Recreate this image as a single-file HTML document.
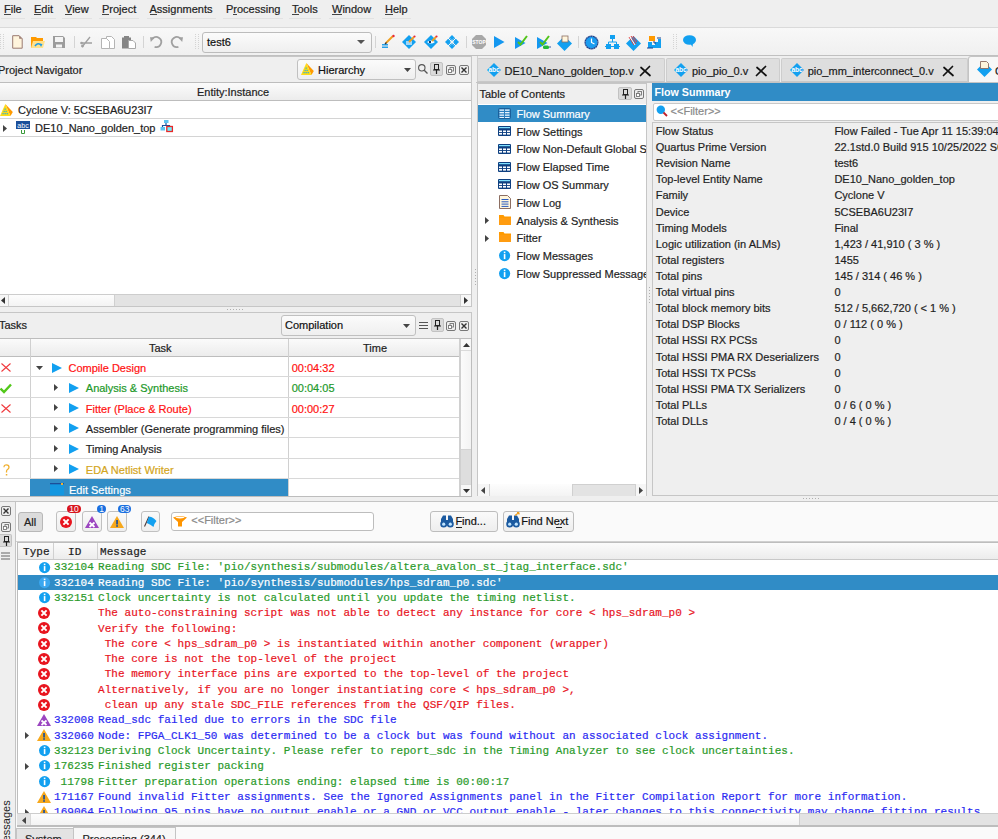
<!DOCTYPE html><html><head><meta charset="utf-8"><style>
html,body{margin:0;padding:0}
body{width:998px;height:839px;overflow:hidden;position:relative;background:#efefef;font-family:'Liberation Sans',sans-serif;font-size:11px;color:#1f1f1f}
.t{position:absolute;white-space:pre;line-height:13px}
.m{-webkit-text-stroke:0.2px;letter-spacing:0.033px}
.s{-webkit-text-stroke:0.2px}
.r{position:absolute;box-sizing:border-box}
svg.r{overflow:visible}
.hdr{background:linear-gradient(#f9f9f9,#ececec)}
.btn{border:1px solid #bdbdbd;border-radius:2px;background:linear-gradient(#f8f8f8,#ececec)}
</style></head><body>

<div class="t s" style="left:4px;top:3px;color:#222;font-family:'Liberation Sans',sans-serif;font-size:11px;">File</div>
<div class="t s" style="left:34px;top:3px;color:#222;font-family:'Liberation Sans',sans-serif;font-size:11px;">Edit</div>
<div class="t s" style="left:65px;top:3px;color:#222;font-family:'Liberation Sans',sans-serif;font-size:11px;">View</div>
<div class="t s" style="left:102px;top:3px;color:#222;font-family:'Liberation Sans',sans-serif;font-size:11px;">Project</div>
<div class="t s" style="left:149.5px;top:3px;color:#222;font-family:'Liberation Sans',sans-serif;font-size:11px;">Assignments</div>
<div class="t s" style="left:226px;top:3px;color:#222;font-family:'Liberation Sans',sans-serif;font-size:11px;">Processing</div>
<div class="t s" style="left:292px;top:3px;color:#222;font-family:'Liberation Sans',sans-serif;font-size:11px;">Tools</div>
<div class="t s" style="left:332px;top:3px;color:#222;font-family:'Liberation Sans',sans-serif;font-size:11px;">Window</div>
<div class="t s" style="left:385px;top:3px;color:#222;font-family:'Liberation Sans',sans-serif;font-size:11px;">Help</div>
<div class="r" style="left:0px;top:27px;width:998px;height:29px;background:linear-gradient(#f8f8f8,#f0f0f0);border-top:1px solid #dadada;border-bottom:1px solid #c0c0c0"></div>
<div class="r" style="left:202px;top:32px;width:170px;height:21px;border:1px solid #bcbcbc;border-radius:3px;background:linear-gradient(#fbfbfb,#efefef)"></div>
<div class="t s" style="left:207px;top:36px;color:#111;font-family:'Liberation Sans',sans-serif;font-size:11px;">test6</div>
<div class="r" style="left:4.0px;top:14px;width:6.71875px;height:1px;background:#444"></div>
<div class="r" style="left:1px;top:18px;width:23.71875px;height:1px;background:#e2e2e2"></div>
<div class="r" style="left:34.0px;top:14px;width:7.34375px;height:1px;background:#444"></div>
<div class="r" style="left:31px;top:18px;width:24.96875px;height:1px;background:#e2e2e2"></div>
<div class="r" style="left:65.0px;top:14px;width:7.34375px;height:1px;background:#444"></div>
<div class="r" style="left:62px;top:18px;width:29.640625px;height:1px;background:#e2e2e2"></div>
<div class="r" style="left:102.0px;top:14px;width:7.34375px;height:1px;background:#444"></div>
<div class="r" style="left:99px;top:18px;width:40.25px;height:1px;background:#e2e2e2"></div>
<div class="r" style="left:149.5px;top:14px;width:7.34375px;height:1px;background:#444"></div>
<div class="r" style="left:146.5px;top:18px;width:69.0px;height:1px;background:#e2e2e2"></div>
<div class="r" style="left:233.34375px;top:14px;width:3.65625px;height:1px;background:#444"></div>
<div class="r" style="left:223px;top:18px;width:60.4375px;height:1px;background:#e2e2e2"></div>
<div class="r" style="left:292.0px;top:14px;width:6.71875px;height:1px;background:#444"></div>
<div class="r" style="left:289px;top:18px;width:31.6875px;height:1px;background:#e2e2e2"></div>
<div class="r" style="left:332.0px;top:14px;width:10.375px;height:1px;background:#444"></div>
<div class="r" style="left:329px;top:18px;width:45.125px;height:1px;background:#e2e2e2"></div>
<div class="r" style="left:385.0px;top:14px;width:7.9375px;height:1px;background:#444"></div>
<div class="r" style="left:382px;top:18px;width:28.625px;height:1px;background:#e2e2e2"></div>
<svg class="r" style="left:0px;top:34px;" width="4" height="16" viewBox="0 0 4 16"><rect x="0" y="0" width="1" height="1" fill="#d4d4d4"/><rect x="3" y="0" width="1" height="1" fill="#d4d4d4"/><rect x="0" y="2" width="1" height="1" fill="#d4d4d4"/><rect x="3" y="2" width="1" height="1" fill="#d4d4d4"/><rect x="0" y="4" width="1" height="1" fill="#d4d4d4"/><rect x="3" y="4" width="1" height="1" fill="#d4d4d4"/><rect x="0" y="6" width="1" height="1" fill="#d4d4d4"/><rect x="3" y="6" width="1" height="1" fill="#d4d4d4"/><rect x="0" y="8" width="1" height="1" fill="#d4d4d4"/><rect x="3" y="8" width="1" height="1" fill="#d4d4d4"/><rect x="0" y="10" width="1" height="1" fill="#d4d4d4"/><rect x="3" y="10" width="1" height="1" fill="#d4d4d4"/><rect x="0" y="12" width="1" height="1" fill="#d4d4d4"/><rect x="3" y="12" width="1" height="1" fill="#d4d4d4"/><rect x="0" y="14" width="1" height="1" fill="#d4d4d4"/><rect x="3" y="14" width="1" height="1" fill="#d4d4d4"/></svg>
<svg class="r" style="left:195px;top:34px;" width="4" height="16" viewBox="0 0 4 16"><rect x="0" y="0" width="1" height="1" fill="#d4d4d4"/><rect x="3" y="0" width="1" height="1" fill="#d4d4d4"/><rect x="0" y="2" width="1" height="1" fill="#d4d4d4"/><rect x="3" y="2" width="1" height="1" fill="#d4d4d4"/><rect x="0" y="4" width="1" height="1" fill="#d4d4d4"/><rect x="3" y="4" width="1" height="1" fill="#d4d4d4"/><rect x="0" y="6" width="1" height="1" fill="#d4d4d4"/><rect x="3" y="6" width="1" height="1" fill="#d4d4d4"/><rect x="0" y="8" width="1" height="1" fill="#d4d4d4"/><rect x="3" y="8" width="1" height="1" fill="#d4d4d4"/><rect x="0" y="10" width="1" height="1" fill="#d4d4d4"/><rect x="3" y="10" width="1" height="1" fill="#d4d4d4"/><rect x="0" y="12" width="1" height="1" fill="#d4d4d4"/><rect x="3" y="12" width="1" height="1" fill="#d4d4d4"/><rect x="0" y="14" width="1" height="1" fill="#d4d4d4"/><rect x="3" y="14" width="1" height="1" fill="#d4d4d4"/></svg>
<svg class="r" style="left:673px;top:34px;" width="4" height="16" viewBox="0 0 4 16"><rect x="0" y="0" width="1" height="1" fill="#d4d4d4"/><rect x="3" y="0" width="1" height="1" fill="#d4d4d4"/><rect x="0" y="2" width="1" height="1" fill="#d4d4d4"/><rect x="3" y="2" width="1" height="1" fill="#d4d4d4"/><rect x="0" y="4" width="1" height="1" fill="#d4d4d4"/><rect x="3" y="4" width="1" height="1" fill="#d4d4d4"/><rect x="0" y="6" width="1" height="1" fill="#d4d4d4"/><rect x="3" y="6" width="1" height="1" fill="#d4d4d4"/><rect x="0" y="8" width="1" height="1" fill="#d4d4d4"/><rect x="3" y="8" width="1" height="1" fill="#d4d4d4"/><rect x="0" y="10" width="1" height="1" fill="#d4d4d4"/><rect x="3" y="10" width="1" height="1" fill="#d4d4d4"/><rect x="0" y="12" width="1" height="1" fill="#d4d4d4"/><rect x="3" y="12" width="1" height="1" fill="#d4d4d4"/><rect x="0" y="14" width="1" height="1" fill="#d4d4d4"/><rect x="3" y="14" width="1" height="1" fill="#d4d4d4"/></svg>
<div class="r" style="left:73.5px;top:36px;width:1px;height:12px;background:#d4d4d4"></div>
<div class="r" style="left:142.5px;top:36px;width:1px;height:12px;background:#d4d4d4"></div>
<div class="r" style="left:375px;top:36px;width:1px;height:12px;background:#d4d4d4"></div>
<div class="r" style="left:465.5px;top:36px;width:1px;height:12px;background:#d4d4d4"></div>
<div class="r" style="left:577.5px;top:36px;width:1px;height:12px;background:#d4d4d4"></div>
<svg class="r" style="left:11.5px;top:35px;" width="11" height="14" viewBox="0 0 11 14"><path d="M0.7 0.7h6.5l3 3v9.5H0.7z" fill="#fff4dc" stroke="#9a7a70" stroke-width="1"/><path d="M7.2 0.7l3 3h-3z" fill="#9a7a70"/></svg>
<svg class="r" style="left:31px;top:36px;" width="15" height="12" viewBox="0 0 15 12"><path d="M0 1h5l1 1h6v3H0z" fill="#ff9a00"/><path d="M0 3h12v9H0z" fill="#ff9a00"/><path d="M2 5h12l-2 7H0z" fill="#ffe28e"/><path d="M4 10q3-4 6-1" fill="none" stroke="#1d9be6" stroke-width="1.6"/><path d="M8.5 7.5l3 0.5-1.5 3z" fill="#1d9be6"/></svg>
<svg class="r" style="left:53px;top:35.5px;" width="12" height="12" viewBox="0 0 12 12"><path d="M0 0h10l2 2v10H0z" fill="#9c9c9c"/><rect x="2" y="1" width="8" height="5" fill="#f4f4f4"/><rect x="3" y="8.5" width="6" height="3" fill="#f4f4f4"/></svg>
<svg class="r" style="left:80px;top:36px;" width="13" height="12" viewBox="0 0 13 12"><path d="M2 11L10 1M12 7L1 7" stroke="#a0a0a0" stroke-width="1.3" fill="none"/><circle cx="2.5" cy="10" r="1.4" fill="#a0a0a0"/><circle cx="1.5" cy="7" r="1.3" fill="#a0a0a0"/></svg>
<svg class="r" style="left:101px;top:35.5px;" width="14" height="13" viewBox="0 0 14 13"><path d="M5.5 0.5h5l3 3v9h-8z" fill="#fff" stroke="#b4b4b4"/><path d="M0.5 2.5h5l3 3v7h-8z" fill="#fff" stroke="#b4b4b4"/></svg>
<svg class="r" style="left:122px;top:35.5px;" width="14" height="13" viewBox="0 0 14 13"><path d="M0 1.5h9v11H0z" fill="#858585"/><rect x="2" y="0" width="5" height="2.5" fill="#858585"/><path d="M6.5 4.5h4.5l2.5 2.5v5.5h-7z" fill="#fff" stroke="#a8a8a8"/></svg>
<svg class="r" style="left:150px;top:36px;" width="12" height="12" viewBox="0 0 12 12"><path d="M2.6 2.6A5 5 0 1 1 4.6 10.8" fill="none" stroke="#a0a0a0" stroke-width="1.8"/><path d="M0 1.2L5 1.2L0.8 6z" fill="#a0a0a0"/></svg>
<svg class="r" style="left:171px;top:36px;" width="12" height="12" viewBox="0 0 12 12"><path d="M9.4 2.6A5 5 0 1 0 7.4 10.8" fill="none" stroke="#a0a0a0" stroke-width="1.8"/><path d="M12 1.2L7 1.2L11.2 6z" fill="#a0a0a0"/></svg>
<svg class="r" style="left:357px;top:40px;" width="8" height="5" viewBox="0 0 8 5"><path d="M0 0h8l-4 4z" fill="#555"/></svg>
<svg class="r" style="left:381px;top:35px;" width="15" height="14" viewBox="0 0 15 14"><rect x="1" y="9" width="6" height="1.5" fill="#26a0e8"/><rect x="1" y="11.5" width="6" height="1.5" fill="#26a0e8"/><path d="M5 8L12 1" stroke="#f0a020" stroke-width="2"/><circle cx="12.5" cy="1" r="1.2" fill="#e8283c"/><path d="M4 9l1.5-1.5" stroke="#333" stroke-width="1.5"/></svg>
<svg class="r" style="left:402px;top:35px;" width="14" height="14" viewBox="0 0 14 14"><path d="M7.0 0L14 7.0L7.0 14L0 7.0z" fill="#12a0f0"/><rect x="4" y="6" width="6" height="4" fill="#9ed6f7"/><path d="M7 7L12 2" stroke="#f0a020" stroke-width="1.8"/><circle cx="12.5" cy="1.5" r="1.1" fill="#e8283c"/></svg>
<svg class="r" style="left:423.5px;top:35px;" width="14" height="14" viewBox="0 0 14 14"><path d="M7.0 0L14 7.0L7.0 14L0 7.0z" fill="#12a0f0"/><path d="M3 7q4-3 8 0q-4 3-8 0z" fill="#fff"/><rect x="5" y="6" width="2" height="2" fill="#1a3a6a"/><path d="M8 6L12 2" stroke="#f0a020" stroke-width="1.8"/><circle cx="12.5" cy="1.5" r="1.1" fill="#e8283c"/></svg>
<svg class="r" style="left:445px;top:35px;" width="14" height="14" viewBox="0 0 14 14"><g fill="#12a0f0"><path d="M7 0l2.5 2.5-2.5 2.5-2.5-2.5z"/><path d="M2.5 4.5l2.5 2.5-2.5 2.5-2.5-2.5z"/><path d="M11.5 4.5l2.5 2.5-2.5 2.5-2.5-2.5z"/><path d="M7 9l2.5 2.5-2.5 2.5-2.5-2.5z"/><path d="M4.5 2.5l2.5 2.5-2.5 2.5-2.5-2.5z" opacity=".9"/><path d="M9.5 2.5l2.5 2.5-2.5 2.5-2.5-2.5z" opacity=".9"/><path d="M4.5 6.5l2.5 2.5-2.5 2.5-2.5-2.5z" opacity=".9"/><path d="M9.5 6.5l2.5 2.5-2.5 2.5-2.5-2.5z" opacity=".9"/></g><path d="M3 3L11 11M11 3L3 11" stroke="#f5f5f5" stroke-width="1"/></svg>
<svg class="r" style="left:472px;top:34.5px;" width="14" height="14" viewBox="0 0 14 14"><path d="M4 0h6l4 4v6l-4 4H4L0 10V4z" fill="#a8a8a8"/><text x="7" y="9" font-size="5" font-family="Liberation Sans" font-weight="bold" fill="#fff" text-anchor="middle">STOP</text></svg>
<svg class="r" style="left:494px;top:36px;" width="11" height="12" viewBox="0 0 11 12"><path d="M0 0L10.5 6L0 12z" fill="#1497f0"/></svg>
<svg class="r" style="left:515px;top:35px;" width="13" height="14" viewBox="0 0 13 14"><path d="M0 2L10.5 8L0 14z" fill="#1497f0"/><path d="M3 7l2.5 2.5L12 1" stroke="#52c41a" stroke-width="2" fill="none"/></svg>
<svg class="r" style="left:536.5px;top:35px;" width="14" height="14" viewBox="0 0 14 14"><path d="M0 2L10.5 8L0 14z" fill="#1497f0"/><path d="M3 7l2.5 2.5L12 1" stroke="#52c41a" stroke-width="2" fill="none"/><rect x="6" y="10.5" width="6" height="3.5" rx="1.5" fill="#22b83a"/><path d="M12 12h2" stroke="#3355aa"/></svg>
<svg class="r" style="left:556.5px;top:35.5px;" width="15" height="15" viewBox="0 0 15 15"><path d="M7.5 0L15 7.5L7.5 15L0 7.5z" fill="#12a0f0"/><rect x="5" y="0" width="6" height="6" fill="#fff5dc" stroke="#8c6e62" stroke-width=".8"/></svg>
<svg class="r" style="left:584px;top:34.5px;" width="15" height="15" viewBox="0 0 15 15"><circle cx="7.5" cy="7.5" r="7" fill="#1b3f8a"/><circle cx="7.5" cy="7.5" r="5.8" fill="#1a9cf0"/><path d="M7.5 3.5v4l3 1.5" stroke="#fff" stroke-width="1.2" fill="none"/><circle cx="7.5" cy="7.5" r="6.4" fill="none" stroke="#fff" stroke-width=".5" stroke-dasharray="1 1.5"/></svg>
<svg class="r" style="left:604.5px;top:34.5px;" width="15" height="15" viewBox="0 0 15 15"><g fill="#12a0f0"><rect x="5" y="0" width="5" height="4"/><rect x="1" y="9" width="5" height="5"/><rect x="9" y="9" width="5" height="5"/></g><path d="M7.5 4v3M3.5 9V7h8v2M0 11.5h15" stroke="#12a0f0" stroke-width="1" fill="none"/></svg>
<svg class="r" style="left:625.5px;top:36px;" width="15" height="15" viewBox="0 0 15 15"><path d="M7.5 0L15 7.5L7.5 15L0 7.5z" fill="#12a0f0"/><path d="M3 1L8 9M5 0L10 8M7 0L11 6" stroke="#e23a3a" stroke-width="1"/><path d="M4 1L9 9" stroke="#fff" stroke-width="1"/></svg>
<svg class="r" style="left:647px;top:34.5px;" width="15" height="15" viewBox="0 0 15 15"><rect x="2" y="1" width="6" height="5" fill="#ff9a00"/><path d="M1 7h4v3h3v-3h3v-3h3v9H1z" fill="#12a0f0"/><path d="M0 13h6M10 3h4" stroke="#1b3f8a" stroke-width="1"/><path d="M7 6v2h2" stroke="#1b3f8a" fill="none"/></svg>
<svg class="r" style="left:683px;top:35px;" width="13" height="12" viewBox="0 0 13 12"><ellipse cx="6.5" cy="5" rx="6.5" ry="4.8" fill="#12a0f0"/><path d="M7 8l2.5 4L10 8z" fill="#12a0f0"/></svg>
<div class="t s" style="left:-2px;top:64px;color:#222;font-family:'Liberation Sans',sans-serif;font-size:11px;">Project Navigator</div>
<div class="r" style="left:297px;top:59px;width:119px;height:21px;border:1px solid #c0c0c0;border-radius:3px;background:linear-gradient(#fbfbfb,#efefef)"></div>
<div class="t s" style="left:318px;top:64px;color:#111;font-family:'Liberation Sans',sans-serif;font-size:11px;">Hierarchy</div>
<div class="r" style="left:0px;top:82px;width:472px;height:225px;background:#fff;border:1px solid #bdbdbd;border-left:none"></div>
<div class="r" style="left:0px;top:83px;width:471px;height:18px;background:linear-gradient(#fbfbfb,#ececec);border-bottom:1px solid #bdbdbd"></div>
<div class="t s" style="left:197px;top:86px;color:#222;font-family:'Liberation Sans',sans-serif;font-size:11px;">Entity:Instance</div>
<div class="r" style="left:0px;top:118px;width:471px;height:1px;background:#d4d4d4"></div>
<div class="r" style="left:0px;top:136px;width:471px;height:1px;background:#d4d4d4"></div>
<div class="t s" style="left:18px;top:104px;color:#222;font-family:'Liberation Sans',sans-serif;font-size:11px;">Cyclone V: 5CSEBA6U23I7</div>
<div class="t s" style="left:35px;top:121.5px;color:#222;font-family:'Liberation Sans',sans-serif;font-size:11px;">DE10_Nano_golden_top</div>
<div class="r" style="left:0px;top:294px;width:471px;height:12px;background:#e3e3e3;border-top:1px solid #cdcdcd"></div>
<div class="r" style="left:459.5px;top:295px;width:11.5px;height:11px;background:#f6f6f6;border-left:1px solid #d0d0d0"></div>
<div class="r" style="left:0px;top:295px;width:8.5px;height:11px;background:#f6f6f6;border-right:1px solid #d0d0d0"></div>
<div class="r" style="left:-2px;top:56px;width:474px;height:251px;border:1px solid #c6c6c6"></div>
<div class="r" style="left:-2px;top:312px;width:474px;height:185px;border:1px solid #c6c6c6"></div>
<div class="r" style="left:476.5px;top:56px;width:1px;height:441px;background:#d0d0d0"></div>
<div class="r" style="left:8.5px;top:295px;width:106px;height:11px;background:linear-gradient(#fdfdfd,#f3f3f3);border-right:1px solid #d0d0d0"></div>
<svg class="r" style="left:403.5px;top:67.5px;" width="7" height="4" viewBox="0 0 7 4"><path d="M0 0h7l-3.5 4z" fill="#444"/></svg>
<svg class="r" style="left:301px;top:62.5px;" width="13" height="12" viewBox="0 0 13 12"><path d="M5.3 0L12.8 8L10.5 12z" fill="#ff9a00"/><path d="M5.3 0L10.5 12H0z" fill="#ffdc14"/><g fill="#3ab0d0"><rect x="4.5" y="4.5" width="1.3" height="1.3"/><rect x="3.5" y="6.8" width="1.3" height="1.3"/><rect x="5.5" y="6.8" width="1.3" height="1.3"/><rect x="2.4" y="9" width="1.3" height="1.3"/><rect x="4.5" y="9" width="1.3" height="1.3"/><rect x="6.6" y="9" width="1.3" height="1.3"/></g></svg>
<svg class="r" style="left:418px;top:64px;" width="10" height="10" viewBox="0 0 10 10"><circle cx="3.8" cy="3.8" r="3.2" fill="none" stroke="#555" stroke-width="1.1"/><path d="M6.2 6.2L9.5 9.5" stroke="#555" stroke-width="1.3"/></svg>
<div class="r" style="left:430px;top:62px;width:13px;height:13.5px;background:#dadada;border:1px solid #c2c2c2;border-radius:2px"></div>
<svg class="r" style="left:433px;top:64px;" width="7" height="10" viewBox="0 0 7 10"><rect x="1.5" y="0.5" width="4" height="5" fill="none" stroke="#222" stroke-width="1"/><path d="M0 6h7M3.5 6v4" stroke="#222" stroke-width="1.2"/></svg>
<svg class="r" style="left:446px;top:64.5px;" width="10" height="10" viewBox="0 0 10 10"><rect x="0.5" y="0.5" width="9" height="9" rx="1.5" fill="none" stroke="#777" stroke-width="1"/><rect x="4" y="2.5" width="3.5" height="3.5" fill="none" stroke="#777" stroke-width=".9"/><rect x="2.5" y="4.5" width="3" height="3" fill="#fff" stroke="#777" stroke-width=".9"/></svg>
<svg class="r" style="left:459px;top:64.5px;" width="10" height="10" viewBox="0 0 10 10"><rect x="0.5" y="0.5" width="9" height="9" rx="1.5" fill="none" stroke="#777" stroke-width="1"/><path d="M2.5 2.5l5 5M7.5 2.5l-5 5" stroke="#333" stroke-width="1.4"/></svg>
<svg class="r" style="left:0px;top:103.5px;" width="13" height="12" viewBox="0 0 13 12"><path d="M5.3 0L12.8 8L10.5 12z" fill="#ff9a00"/><path d="M5.3 0L10.5 12H0z" fill="#ffdc14"/><g fill="#3ab0d0"><rect x="4.5" y="4.5" width="1.3" height="1.3"/><rect x="3.5" y="6.8" width="1.3" height="1.3"/><rect x="5.5" y="6.8" width="1.3" height="1.3"/><rect x="2.4" y="9" width="1.3" height="1.3"/><rect x="4.5" y="9" width="1.3" height="1.3"/><rect x="6.6" y="9" width="1.3" height="1.3"/></g></svg>
<svg class="r" style="left:3px;top:124.5px;" width="4" height="7" viewBox="0 0 4 7"><path d="M0 0v7l4-3.5z" fill="#444"/></svg>
<svg class="r" style="left:16px;top:121px;" width="14" height="14" viewBox="0 0 14 14"><rect x="0" y="0" width="14" height="8" fill="#1b4f9a"/><text x="7" y="6.5" font-size="7" font-family="Liberation Sans" fill="#fff" text-anchor="middle">abc</text><path d="M5.5 9v3.5h3V9" stroke="#3a9a3a" stroke-width="1" fill="none"/></svg>
<svg class="r" style="left:159.5px;top:120px;" width="13" height="12" viewBox="0 0 13 12"><rect x="4" y="0" width="4.5" height="3" fill="#5ec4f0"/><path d="M6 3v2.5M2.5 7.5V5.5h7v2" stroke="#1b4f9a" stroke-width="1.2" fill="none"/><rect x="0.5" y="7" width="4.5" height="3.5" fill="#5ec4f0"/><rect x="6.8" y="6.5" width="5.6" height="5" fill="#6cf0ff" stroke="#e82828" stroke-width="1.3"/></svg>
<div class="t s" style="left:-1px;top:319px;color:#222;font-family:'Liberation Sans',sans-serif;font-size:11px;">Tasks</div>
<div class="r" style="left:281px;top:315px;width:135px;height:21px;border:1px solid #c0c0c0;border-radius:3px;background:linear-gradient(#fbfbfb,#efefef)"></div>
<div class="t s" style="left:285px;top:319px;color:#111;font-family:'Liberation Sans',sans-serif;font-size:11px;">Compilation</div>
<div class="r" style="left:0px;top:338px;width:472px;height:159px;background:#fff;border:1px solid #bdbdbd;border-left:none"></div>
<div class="r" style="left:0px;top:339px;width:459px;height:18px;background:linear-gradient(#fbfbfb,#ececec);border-bottom:1px solid #bdbdbd"></div>
<div class="r" style="left:30px;top:339px;width:1px;height:157px;background:#d0d0d0"></div>
<div class="r" style="left:288px;top:339px;width:1px;height:157px;background:#d0d0d0"></div>
<div class="r" style="left:459px;top:339px;width:1px;height:157px;background:#d0d0d0"></div>
<div class="t s" style="left:149px;top:342px;color:#222;font-family:'Liberation Sans',sans-serif;font-size:11px;">Task</div>
<div class="t s" style="left:363px;top:342px;color:#222;font-family:'Liberation Sans',sans-serif;font-size:11px;">Time</div>
<div class="r" style="left:0px;top:376.35px;width:459px;height:1px;background:#d8d8d8"></div>
<div class="t s" style="left:68.5px;top:362.0px;color:#f11;font-family:'Liberation Sans',sans-serif;font-size:11px;">Compile Design</div>
<div class="t s" style="left:291.7px;top:362.0px;color:#f11;font-family:'Liberation Sans',sans-serif;font-size:11px;">00:04:32</div>
<div class="r" style="left:0px;top:396.70000000000005px;width:459px;height:1px;background:#d8d8d8"></div>
<div class="t s" style="left:85.8px;top:382.35px;color:#22992a;font-family:'Liberation Sans',sans-serif;font-size:11px;">Analysis &amp; Synthesis</div>
<div class="t s" style="left:291.7px;top:382.35px;color:#22992a;font-family:'Liberation Sans',sans-serif;font-size:11px;">00:04:05</div>
<div class="r" style="left:0px;top:417.05px;width:459px;height:1px;background:#d8d8d8"></div>
<div class="t s" style="left:85.8px;top:402.7px;color:#f11;font-family:'Liberation Sans',sans-serif;font-size:11px;">Fitter (Place &amp; Route)</div>
<div class="t s" style="left:291.7px;top:402.7px;color:#f11;font-family:'Liberation Sans',sans-serif;font-size:11px;">00:00:27</div>
<div class="r" style="left:0px;top:437.40000000000003px;width:459px;height:1px;background:#d8d8d8"></div>
<div class="t s" style="left:85.8px;top:423.05px;color:#1f1f1f;font-family:'Liberation Sans',sans-serif;font-size:11px;">Assembler (Generate programming files)</div>
<div class="r" style="left:0px;top:457.75px;width:459px;height:1px;background:#d8d8d8"></div>
<div class="t s" style="left:85.8px;top:443.4px;color:#1f1f1f;font-family:'Liberation Sans',sans-serif;font-size:11px;">Timing Analysis</div>
<div class="r" style="left:0px;top:478.1px;width:459px;height:1px;background:#d8d8d8"></div>
<div class="t s" style="left:85.8px;top:463.75px;color:#d4a520;font-family:'Liberation Sans',sans-serif;font-size:11px;">EDA Netlist Writer</div>
<div class="r" style="left:30px;top:479px;width:258px;height:17px;background:#308cc6"></div>
<div class="t s" style="left:69px;top:483.5px;color:#fff;font-family:'Liberation Sans',sans-serif;font-size:11px;">Edit Settings</div>
<svg class="r" style="left:402.5px;top:324px;" width="7" height="4" viewBox="0 0 7 4"><path d="M0 0h7l-3.5 4z" fill="#444"/></svg>
<svg class="r" style="left:419px;top:321px;" width="9" height="9" viewBox="0 0 9 9"><path d="M0 1.5h9M0 4.5h9M0 7.5h9" stroke="#555" stroke-width="1.2"/></svg>
<div class="r" style="left:430.5px;top:318px;width:13px;height:13.5px;background:#dadada;border:1px solid #c2c2c2;border-radius:2px"></div>
<svg class="r" style="left:433.5px;top:320px;" width="7" height="10" viewBox="0 0 7 10"><rect x="1.5" y="0.5" width="4" height="5" fill="none" stroke="#222" stroke-width="1"/><path d="M0 6h7M3.5 6v4" stroke="#222" stroke-width="1.2"/></svg>
<svg class="r" style="left:446px;top:320.5px;" width="10" height="10" viewBox="0 0 10 10"><rect x="0.5" y="0.5" width="9" height="9" rx="1.5" fill="none" stroke="#777" stroke-width="1"/><rect x="4" y="2.5" width="3.5" height="3.5" fill="none" stroke="#777" stroke-width=".9"/><rect x="2.5" y="4.5" width="3" height="3" fill="#fff" stroke="#777" stroke-width=".9"/></svg>
<svg class="r" style="left:459px;top:320.5px;" width="10" height="10" viewBox="0 0 10 10"><rect x="0.5" y="0.5" width="9" height="9" rx="1.5" fill="none" stroke="#777" stroke-width="1"/><path d="M2.5 2.5l5 5M7.5 2.5l-5 5" stroke="#333" stroke-width="1.4"/></svg>
<svg class="r" style="left:1px;top:363px;" width="10" height="9" viewBox="0 0 10 9"><path d="M0.5 0.5L9.5 8.5M9.5 0.5L0.5 8.5" stroke="#f0383c" stroke-width="1.1"/></svg>
<svg class="r" style="left:0px;top:383px;" width="12" height="10" viewBox="0 0 12 10"><path d="M0.5 5.5L4 9L11 1.5" stroke="#52c81a" stroke-width="2.4" fill="none"/></svg>
<svg class="r" style="left:1px;top:404px;" width="10" height="9" viewBox="0 0 10 9"><path d="M0.5 0.5L9.5 8.5M9.5 0.5L0.5 8.5" stroke="#f0383c" stroke-width="1.1"/></svg>
<svg class="r" style="left:3px;top:463.5px;" width="7" height="12" viewBox="0 0 7 12"><path d="M1 3.2Q1 0.8 3.5 0.8Q6 0.8 6 3.2Q6 4.8 4.2 5.8Q3.5 6.3 3.5 7.8V8.5" stroke="#f0b030" stroke-width="1.3" fill="none"/><rect x="2.8" y="10" width="1.5" height="1.5" fill="#f0b030"/></svg>
<svg class="r" style="left:36px;top:365.5px;" width="7" height="4" viewBox="0 0 7 4"><path d="M0 0h7l-3.5 4z" fill="#444"/></svg>
<svg class="r" style="left:51.5px;top:362.5px;" width="10" height="10" viewBox="0 0 10 10"><path d="M0 0L10 5L0 10z" fill="#12a0f0"/></svg>
<svg class="r" style="left:54px;top:384.0px;" width="4" height="7" viewBox="0 0 4 7"><path d="M0 0v7l4-3.5z" fill="#444"/></svg>
<svg class="r" style="left:68.5px;top:382.5px;" width="10" height="10" viewBox="0 0 10 10"><path d="M0 0L10 5L0 10z" fill="#12a0f0"/></svg>
<svg class="r" style="left:54px;top:404.35px;" width="4" height="7" viewBox="0 0 4 7"><path d="M0 0v7l4-3.5z" fill="#444"/></svg>
<svg class="r" style="left:68.5px;top:402.85px;" width="10" height="10" viewBox="0 0 10 10"><path d="M0 0L10 5L0 10z" fill="#12a0f0"/></svg>
<svg class="r" style="left:54px;top:424.7px;" width="4" height="7" viewBox="0 0 4 7"><path d="M0 0v7l4-3.5z" fill="#444"/></svg>
<svg class="r" style="left:68.5px;top:423.2px;" width="10" height="10" viewBox="0 0 10 10"><path d="M0 0L10 5L0 10z" fill="#12a0f0"/></svg>
<svg class="r" style="left:54px;top:445.05px;" width="4" height="7" viewBox="0 0 4 7"><path d="M0 0v7l4-3.5z" fill="#444"/></svg>
<svg class="r" style="left:68.5px;top:443.55px;" width="10" height="10" viewBox="0 0 10 10"><path d="M0 0L10 5L0 10z" fill="#12a0f0"/></svg>
<svg class="r" style="left:54px;top:465.4px;" width="4" height="7" viewBox="0 0 4 7"><path d="M0 0v7l4-3.5z" fill="#444"/></svg>
<svg class="r" style="left:68.5px;top:463.9px;" width="10" height="10" viewBox="0 0 10 10"><path d="M0 0L10 5L0 10z" fill="#12a0f0"/></svg>
<svg class="r" style="left:49.5px;top:483px;" width="14" height="12" viewBox="0 0 14 12"><rect x="0" y="0" width="14" height="12" fill="#1497e0"/><rect x="0" y="0" width="14" height="1.3" fill="#1b4f9a"/><rect x="11" y="0" width="2" height="2" fill="#f0b030"/></svg>
<div class="r" style="left:460px;top:339px;width:11px;height:157px;background:#dedede;border-left:1px solid #d0d0d0"></div>
<div class="r" style="left:461px;top:339px;width:10px;height:11.5px;background:#f7f7f7;border-bottom:1px solid #dadada"></div>
<div class="r" style="left:461px;top:350.5px;width:10px;height:99.5px;background:linear-gradient(90deg,#fbfbfb,#f3f3f3);border-bottom:1px solid #d4d4d4"></div>
<div class="r" style="left:461px;top:483.5px;width:10px;height:12.5px;background:#f7f7f7;border-top:1px solid #dadada"></div>
<svg class="r" style="left:462.5px;top:343px;" width="7" height="4" viewBox="0 0 7 4"><path d="M0 4h7L3.5 0z" fill="#333"/></svg>
<svg class="r" style="left:462.5px;top:489px;" width="7" height="4" viewBox="0 0 7 4"><path d="M0 0h7L3.5 4z" fill="#333"/></svg>
<svg class="r" style="left:1px;top:297px;" width="4" height="7" viewBox="0 0 4 7"><path d="M4 0v7L0 3.5z" fill="#333"/></svg>
<svg class="r" style="left:464px;top:297px;" width="4" height="7" viewBox="0 0 4 7"><path d="M0 0v7l4-3.5z" fill="#333"/></svg>
<div class="r" style="left:477px;top:58px;width:188px;height:23.5px;background:#dedede;border:1px solid #cdcdcd;border-bottom:1px solid #c8c8c8;border-radius:2px 2px 0 0"></div>
<div class="t s" style="left:504.6px;top:65.3px;color:#1a1a1a;font-family:'Liberation Sans',sans-serif;font-size:11px;">DE10_Nano_golden_top.v</div>
<div class="r" style="left:666px;top:58px;width:114px;height:23.5px;background:#dedede;border:1px solid #cdcdcd;border-bottom:1px solid #c8c8c8;border-radius:2px 2px 0 0"></div>
<div class="t s" style="left:692px;top:65.3px;color:#1a1a1a;font-family:'Liberation Sans',sans-serif;font-size:11px;">pio_pio_0.v</div>
<div class="r" style="left:781px;top:58px;width:187px;height:23.5px;background:#dedede;border:1px solid #cdcdcd;border-bottom:1px solid #c8c8c8;border-radius:2px 2px 0 0"></div>
<div class="t s" style="left:807.7px;top:65.3px;color:#1a1a1a;font-family:'Liberation Sans',sans-serif;font-size:11px;">pio_mm_interconnect_0.v</div>
<div class="r" style="left:968px;top:56px;width:40px;height:27px;background:#f7f7f7;border:1px solid #c4c4c4;border-bottom:none;border-radius:3px 3px 0 0"></div>
<div class="t s" style="left:995px;top:65.3px;color:#1a1a1a;font-family:'Liberation Sans',sans-serif;font-size:11px;">Compilation Report - test6</div>
<div class="r" style="left:476px;top:82px;width:522px;height:416px;background:#efefef;border-top:1px solid #c4c4c4"></div>
<div class="r" style="left:477px;top:83px;width:170px;height:413px;background:#fff;border:1px solid #c6c6c6"></div>
<div class="r" style="left:478px;top:84px;width:168px;height:20px;background:#efefef"></div>
<div class="t s" style="left:479.5px;top:87.7px;color:#222;font-family:'Liberation Sans',sans-serif;font-size:11px;">Table of Contents</div>
<div class="r" style="left:478px;top:104.5px;width:168px;height:17px;background:#308cc6"></div>
<div class="r" style="left:478px;top:104px;width:168px;height:380px;overflow:hidden">
<div class="t s" style="left:38.5px;top:3.799999999999997px;color:#fff">Flow Summary</div>
<div class="t s" style="left:38.5px;top:21.599999999999994px;color:#1f1f1f">Flow Settings</div>
<div class="t s" style="left:38.5px;top:39.400000000000006px;color:#1f1f1f">Flow Non-Default Global Settings</div>
<div class="t s" style="left:38.5px;top:57.19999999999999px;color:#1f1f1f">Flow Elapsed Time</div>
<div class="t s" style="left:38.5px;top:75.0px;color:#1f1f1f">Flow OS Summary</div>
<div class="t s" style="left:38.5px;top:92.80000000000001px;color:#1f1f1f">Flow Log</div>
<div class="t s" style="left:38.5px;top:110.60000000000002px;color:#1f1f1f">Analysis &amp; Synthesis</div>
<div class="t s" style="left:38.5px;top:128.4px;color:#1f1f1f">Fitter</div>
<div class="t s" style="left:38.5px;top:146.2px;color:#1f1f1f">Flow Messages</div>
<div class="t s" style="left:38.5px;top:164.0px;color:#1f1f1f">Flow Suppressed Messages</div>
</div>
<div class="r" style="left:478px;top:483.5px;width:168px;height:12px;background:#e3e3e3;border-top:1px solid #d0d0d0"></div>
<div class="r" style="left:634.5px;top:484px;width:11.5px;height:11.5px;background:#f6f6f6;border-left:1px solid #d0d0d0"></div>
<div class="r" style="left:478px;top:484px;width:11.5px;height:11.5px;background:#f6f6f6;border-right:1px solid #d0d0d0"></div>
<div class="r" style="left:489.5px;top:484px;width:83px;height:11.5px;background:linear-gradient(#fdfdfd,#f3f3f3);border-right:1px solid #d0d0d0"></div>
<svg class="r" style="left:487.4px;top:62.599999999999994px;" width="14" height="14" viewBox="0 0 14 14"><path d="M7 0L14 7L7 14L0 7z" fill="#12a0f0"/><text x="7" y="9" font-size="6.5" font-weight="bold" font-family="Liberation Sans" fill="#fff" text-anchor="middle">abc</text></svg>
<svg class="r" style="left:639.5px;top:65.5px;" width="11" height="10" viewBox="0 0 11 10"><path d="M1 1.5L10 9.5M9.5 0.5L0.5 9.5" stroke="#111" stroke-width="1.7" stroke-linecap="round"/></svg>
<svg class="r" style="left:674px;top:62.599999999999994px;" width="14" height="14" viewBox="0 0 14 14"><path d="M7 0L14 7L7 14L0 7z" fill="#12a0f0"/><text x="7" y="9" font-size="6.5" font-weight="bold" font-family="Liberation Sans" fill="#fff" text-anchor="middle">abc</text></svg>
<svg class="r" style="left:756px;top:65.5px;" width="11" height="10" viewBox="0 0 11 10"><path d="M1 1.5L10 9.5M9.5 0.5L0.5 9.5" stroke="#111" stroke-width="1.7" stroke-linecap="round"/></svg>
<svg class="r" style="left:790px;top:62.599999999999994px;" width="14" height="14" viewBox="0 0 14 14"><path d="M7 0L14 7L7 14L0 7z" fill="#12a0f0"/><text x="7" y="9" font-size="6.5" font-weight="bold" font-family="Liberation Sans" fill="#fff" text-anchor="middle">abc</text></svg>
<svg class="r" style="left:943px;top:65.5px;" width="11" height="10" viewBox="0 0 11 10"><path d="M1 1.5L10 9.5M9.5 0.5L0.5 9.5" stroke="#111" stroke-width="1.7" stroke-linecap="round"/></svg>
<svg class="r" style="left:977px;top:61px;" width="15" height="15" viewBox="0 0 15 15"><path d="M7.5 1L15 8.5L7.5 16L0 8.5z" fill="#12a0f0"/><path d="M3.5 0.5h6l2 2v5h-8z" fill="#fff5dc" stroke="#8c6e62" stroke-width=".9"/></svg>
<div class="r" style="left:618px;top:87px;width:14px;height:13px;background:#dadada;border:1px solid #c2c2c2;border-radius:2px"></div>
<svg class="r" style="left:621.5px;top:88.5px;" width="7" height="10" viewBox="0 0 7 10"><rect x="1.5" y="0.5" width="4" height="5" fill="none" stroke="#222" stroke-width="1"/><path d="M0 6h7M3.5 6v4" stroke="#222" stroke-width="1.2"/></svg>
<svg class="r" style="left:633.8px;top:88.5px;" width="10" height="10" viewBox="0 0 10 10"><rect x="0.5" y="0.5" width="9" height="9" rx="1.5" fill="none" stroke="#777" stroke-width="1"/><rect x="4" y="2.5" width="3.5" height="3.5" fill="none" stroke="#777" stroke-width=".9"/><rect x="2.5" y="4.5" width="3" height="3" fill="#fff" stroke="#777" stroke-width=".9"/></svg>
<svg class="r" style="left:498px;top:108px;" width="13" height="11" viewBox="0 0 13 11"><rect x="0.5" y="0.5" width="12" height="10" rx="1" fill="#2a7fbf" stroke="#1b5f9a"/><g fill="#e8f4ff"><rect x="1.5" y="1.5" width="4.5" height="1.3"/><rect x="7" y="1.5" width="4.5" height="1.3"/><rect x="1.5" y="4" width="4.5" height="1.3"/><rect x="7" y="4" width="4.5" height="1.3"/><rect x="1.5" y="6.5" width="4.5" height="1.3"/><rect x="7" y="6.5" width="4.5" height="1.3"/><rect x="1.5" y="9" width="4.5" height="1"/><rect x="7" y="9" width="4.5" height="1"/></g></svg>
<svg class="r" style="left:498px;top:126.0px;" width="13" height="10" viewBox="0 0 13 10"><rect x="0" y="0" width="13" height="10" rx="1" fill="#0d3f80"/><rect x="1" y="1" width="11" height="1.2" fill="#7fe0ff"/><g fill="#fff"><rect x="1" y="4.5" width="3" height="1.6"/><rect x="5" y="4.5" width="3" height="1.6"/><rect x="9" y="4.5" width="3" height="1.6"/><rect x="1" y="7" width="3" height="1.6"/><rect x="5" y="7" width="3" height="1.6"/><rect x="9" y="7" width="3" height="1.6"/></g></svg>
<svg class="r" style="left:498px;top:143.8px;" width="13" height="10" viewBox="0 0 13 10"><rect x="0" y="0" width="13" height="10" rx="1" fill="#0d3f80"/><rect x="1" y="1" width="11" height="1.2" fill="#7fe0ff"/><g fill="#fff"><rect x="1" y="4.5" width="3" height="1.6"/><rect x="5" y="4.5" width="3" height="1.6"/><rect x="9" y="4.5" width="3" height="1.6"/><rect x="1" y="7" width="3" height="1.6"/><rect x="5" y="7" width="3" height="1.6"/><rect x="9" y="7" width="3" height="1.6"/></g></svg>
<svg class="r" style="left:498px;top:161.6px;" width="13" height="10" viewBox="0 0 13 10"><rect x="0" y="0" width="13" height="10" rx="1" fill="#0d3f80"/><rect x="1" y="1" width="11" height="1.2" fill="#7fe0ff"/><g fill="#fff"><rect x="1" y="4.5" width="3" height="1.6"/><rect x="5" y="4.5" width="3" height="1.6"/><rect x="9" y="4.5" width="3" height="1.6"/><rect x="1" y="7" width="3" height="1.6"/><rect x="5" y="7" width="3" height="1.6"/><rect x="9" y="7" width="3" height="1.6"/></g></svg>
<svg class="r" style="left:498px;top:179.4px;" width="13" height="10" viewBox="0 0 13 10"><rect x="0" y="0" width="13" height="10" rx="1" fill="#0d3f80"/><rect x="1" y="1" width="11" height="1.2" fill="#7fe0ff"/><g fill="#fff"><rect x="1" y="4.5" width="3" height="1.6"/><rect x="5" y="4.5" width="3" height="1.6"/><rect x="9" y="4.5" width="3" height="1.6"/><rect x="1" y="7" width="3" height="1.6"/><rect x="5" y="7" width="3" height="1.6"/><rect x="9" y="7" width="3" height="1.6"/></g></svg>
<svg class="r" style="left:499px;top:195px;" width="12" height="14" viewBox="0 0 12 14"><path d="M0.5 0.5h8l3 3v10h-11z" fill="#fff6dd" stroke="#8c6e62"/><g fill="#2a5bbf"><rect x="2.5" y="4" width="7" height="1"/><rect x="2.5" y="6.3" width="7" height="1"/><rect x="2.5" y="8.6" width="7" height="1"/><rect x="2.5" y="10.9" width="7" height="1"/></g></svg>
<svg class="r" style="left:485px;top:217px;" width="4" height="7" viewBox="0 0 4 7"><path d="M0 0v7l4-3.5z" fill="#444"/></svg>
<svg class="r" style="left:485px;top:235px;" width="4" height="7" viewBox="0 0 4 7"><path d="M0 0v7l4-3.5z" fill="#444"/></svg>
<svg class="r" style="left:498.5px;top:214.5px;" width="12" height="10" viewBox="0 0 12 10"><path d="M0 0h4.5l1 1.5H12V10H0z" fill="#ff9a00"/><rect x="0" y="3" width="12" height="7" fill="#ff9c10"/></svg>
<svg class="r" style="left:498.5px;top:232.3px;" width="12" height="10" viewBox="0 0 12 10"><path d="M0 0h4.5l1 1.5H12V10H0z" fill="#ff9a00"/><rect x="0" y="3" width="12" height="7" fill="#ff9c10"/></svg>
<svg class="r" style="left:499.2px;top:250.20000000000002px;" width="11.2" height="11.2" viewBox="0 0 11.2 11.2"><circle cx="5.6" cy="5.6" r="5.6" fill="#12a0f0"/><rect x="4.8" y="4.1" width="1.6" height="5" fill="#fff"/><rect x="4.8" y="1.5999999999999996" width="1.6" height="1.6" fill="#fff"/></svg>
<svg class="r" style="left:499.2px;top:268.0px;" width="11.2" height="11.2" viewBox="0 0 11.2 11.2"><circle cx="5.6" cy="5.6" r="5.6" fill="#12a0f0"/><rect x="4.8" y="4.1" width="1.6" height="5" fill="#fff"/><rect x="4.8" y="1.5999999999999996" width="1.6" height="1.6" fill="#fff"/></svg>
<div class="r" style="left:652px;top:83px;width:346px;height:18px;background:#308cc6"></div>
<div class="t" style="left:654.5px;top:86px;color:#fff;font-family:'Liberation Sans',sans-serif;font-size:10.7px;font-weight:bold;">Flow Summary</div>
<div class="r" style="left:653px;top:102.5px;width:350px;height:18px;background:#fff;border:1px solid #c8c8c8;border-radius:2px"></div>
<div class="t s" style="left:670.6px;top:105px;color:#8a8a8a;font-family:'Liberation Sans',sans-serif;font-size:11px;">&lt;&lt;Filter&gt;&gt;</div>
<div class="r" style="left:652px;top:122px;width:346px;height:374px;background:#efefef;border:1px solid #c6c6c6;border-right:none"></div>
<div class="t s" style="left:655.7px;top:125.0px;color:#1f1f1f;font-family:'Liberation Sans',sans-serif;font-size:11px;">Flow Status</div>
<div class="t s" style="left:834.4px;top:125.0px;color:#1f1f1f;font-family:'Liberation Sans',sans-serif;font-size:11px;">Flow Failed - Tue Apr 11 15:39:04 2023</div>
<div class="t s" style="left:655.7px;top:141.11px;color:#1f1f1f;font-family:'Liberation Sans',sans-serif;font-size:11px;">Quartus Prime Version</div>
<div class="t s" style="left:834.4px;top:141.11px;color:#1f1f1f;font-family:'Liberation Sans',sans-serif;font-size:11px;">22.1std.0 Build 915 10/25/2022 SC Lite Edition</div>
<div class="t s" style="left:655.7px;top:157.22px;color:#1f1f1f;font-family:'Liberation Sans',sans-serif;font-size:11px;">Revision Name</div>
<div class="t s" style="left:834.4px;top:157.22px;color:#1f1f1f;font-family:'Liberation Sans',sans-serif;font-size:11px;">test6</div>
<div class="t s" style="left:655.7px;top:173.32999999999998px;color:#1f1f1f;font-family:'Liberation Sans',sans-serif;font-size:11px;">Top-level Entity Name</div>
<div class="t s" style="left:834.4px;top:173.32999999999998px;color:#1f1f1f;font-family:'Liberation Sans',sans-serif;font-size:11px;">DE10_Nano_golden_top</div>
<div class="t s" style="left:655.7px;top:189.44px;color:#1f1f1f;font-family:'Liberation Sans',sans-serif;font-size:11px;">Family</div>
<div class="t s" style="left:834.4px;top:189.44px;color:#1f1f1f;font-family:'Liberation Sans',sans-serif;font-size:11px;">Cyclone V</div>
<div class="t s" style="left:655.7px;top:205.55px;color:#1f1f1f;font-family:'Liberation Sans',sans-serif;font-size:11px;">Device</div>
<div class="t s" style="left:834.4px;top:205.55px;color:#1f1f1f;font-family:'Liberation Sans',sans-serif;font-size:11px;">5CSEBA6U23I7</div>
<div class="t s" style="left:655.7px;top:221.66px;color:#1f1f1f;font-family:'Liberation Sans',sans-serif;font-size:11px;">Timing Models</div>
<div class="t s" style="left:834.4px;top:221.66px;color:#1f1f1f;font-family:'Liberation Sans',sans-serif;font-size:11px;">Final</div>
<div class="t s" style="left:655.7px;top:237.76999999999998px;color:#1f1f1f;font-family:'Liberation Sans',sans-serif;font-size:11px;">Logic utilization (in ALMs)</div>
<div class="t s" style="left:834.4px;top:237.76999999999998px;color:#1f1f1f;font-family:'Liberation Sans',sans-serif;font-size:11px;">1,423 / 41,910 ( 3 % )</div>
<div class="t s" style="left:655.7px;top:253.88px;color:#1f1f1f;font-family:'Liberation Sans',sans-serif;font-size:11px;">Total registers</div>
<div class="t s" style="left:834.4px;top:253.88px;color:#1f1f1f;font-family:'Liberation Sans',sans-serif;font-size:11px;">1455</div>
<div class="t s" style="left:655.7px;top:269.99px;color:#1f1f1f;font-family:'Liberation Sans',sans-serif;font-size:11px;">Total pins</div>
<div class="t s" style="left:834.4px;top:269.99px;color:#1f1f1f;font-family:'Liberation Sans',sans-serif;font-size:11px;">145 / 314 ( 46 % )</div>
<div class="t s" style="left:655.7px;top:286.1px;color:#1f1f1f;font-family:'Liberation Sans',sans-serif;font-size:11px;">Total virtual pins</div>
<div class="t s" style="left:834.4px;top:286.1px;color:#1f1f1f;font-family:'Liberation Sans',sans-serif;font-size:11px;">0</div>
<div class="t s" style="left:655.7px;top:302.21px;color:#1f1f1f;font-family:'Liberation Sans',sans-serif;font-size:11px;">Total block memory bits</div>
<div class="t s" style="left:834.4px;top:302.21px;color:#1f1f1f;font-family:'Liberation Sans',sans-serif;font-size:11px;">512 / 5,662,720 ( &lt; 1 % )</div>
<div class="t s" style="left:655.7px;top:318.32px;color:#1f1f1f;font-family:'Liberation Sans',sans-serif;font-size:11px;">Total DSP Blocks</div>
<div class="t s" style="left:834.4px;top:318.32px;color:#1f1f1f;font-family:'Liberation Sans',sans-serif;font-size:11px;">0 / 112 ( 0 % )</div>
<div class="t s" style="left:655.7px;top:334.43px;color:#1f1f1f;font-family:'Liberation Sans',sans-serif;font-size:11px;">Total HSSI RX PCSs</div>
<div class="t s" style="left:834.4px;top:334.43px;color:#1f1f1f;font-family:'Liberation Sans',sans-serif;font-size:11px;">0</div>
<div class="t s" style="left:655.7px;top:350.53999999999996px;color:#1f1f1f;font-family:'Liberation Sans',sans-serif;font-size:11px;">Total HSSI PMA RX Deserializers</div>
<div class="t s" style="left:834.4px;top:350.53999999999996px;color:#1f1f1f;font-family:'Liberation Sans',sans-serif;font-size:11px;">0</div>
<div class="t s" style="left:655.7px;top:366.65px;color:#1f1f1f;font-family:'Liberation Sans',sans-serif;font-size:11px;">Total HSSI TX PCSs</div>
<div class="t s" style="left:834.4px;top:366.65px;color:#1f1f1f;font-family:'Liberation Sans',sans-serif;font-size:11px;">0</div>
<div class="t s" style="left:655.7px;top:382.76px;color:#1f1f1f;font-family:'Liberation Sans',sans-serif;font-size:11px;">Total HSSI PMA TX Serializers</div>
<div class="t s" style="left:834.4px;top:382.76px;color:#1f1f1f;font-family:'Liberation Sans',sans-serif;font-size:11px;">0</div>
<div class="t s" style="left:655.7px;top:398.87px;color:#1f1f1f;font-family:'Liberation Sans',sans-serif;font-size:11px;">Total PLLs</div>
<div class="t s" style="left:834.4px;top:398.87px;color:#1f1f1f;font-family:'Liberation Sans',sans-serif;font-size:11px;">0 / 6 ( 0 % )</div>
<div class="t s" style="left:655.7px;top:414.98px;color:#1f1f1f;font-family:'Liberation Sans',sans-serif;font-size:11px;">Total DLLs</div>
<div class="t s" style="left:834.4px;top:414.98px;color:#1f1f1f;font-family:'Liberation Sans',sans-serif;font-size:11px;">0 / 4 ( 0 % )</div>
<div class="r" style="left:0px;top:501px;width:998px;height:338px;background:#efefef;border-top:1px solid #c4c4c4"></div>
<div class="r" style="left:15px;top:502px;width:983px;height:337px;background:#fafafa;border-left:1px solid #c4c4c4"></div>
<div class="r" style="left:18px;top:511.5px;width:25px;height:20px;background:#dcdcdc;border:1px solid #b8b8b8;border-radius:3px"></div>
<div class="t s" style="left:24px;top:515.8px;color:#222;font-family:'Liberation Sans',sans-serif;font-size:11px;">All</div>
<div class="r" style="left:56px;top:511px;width:20px;height:20.5px;background:linear-gradient(#fafafa,#eeeeee);border:1px solid #c0c0c0;border-radius:3px"></div>
<div class="r" style="left:81.5px;top:511px;width:20.5px;height:20.5px;background:linear-gradient(#fafafa,#eeeeee);border:1px solid #c0c0c0;border-radius:3px"></div>
<div class="r" style="left:107px;top:511px;width:20px;height:20.5px;background:linear-gradient(#fafafa,#eeeeee);border:1px solid #c0c0c0;border-radius:3px"></div>
<div class="r" style="left:140.5px;top:511px;width:19.5px;height:20.5px;background:linear-gradient(#fafafa,#eeeeee);border:1px solid #c0c0c0;border-radius:3px"></div>
<div class="r" style="left:170.5px;top:511.5px;width:203px;height:19px;background:#fff;border:1px solid #bdbdbd;border-radius:3px"></div>
<div class="t s" style="left:191.3px;top:514.3px;color:#8a8a8a;font-family:'Liberation Sans',sans-serif;font-size:11px;">&lt;&lt;Filter&gt;&gt;</div>
<div class="r" style="left:430px;top:511px;width:67.5px;height:20.5px;background:linear-gradient(#fafafa,#eeeeee);border:1px solid #bdbdbd;border-radius:3px"></div>
<div class="t s" style="left:455.4px;top:515.3px;color:#111;font-family:'Liberation Sans',sans-serif;font-size:11px;">Find...</div>
<div class="r" style="left:503px;top:511px;width:71px;height:20.5px;background:linear-gradient(#fafafa,#eeeeee);border:1px solid #bdbdbd;border-radius:3px"></div>
<div class="t s" style="left:521.3px;top:515.3px;color:#111;font-family:'Liberation Sans',sans-serif;font-size:11px;">Find Next</div>
<div class="r" style="left:16px;top:540.5px;width:982px;height:1px;background:#d0d0d0"></div>
<div class="r" style="left:17px;top:541.5px;width:981px;height:285px;background:#fff;border:1px solid #bdbdbd;border-right:none"></div>
<div class="r" style="left:18px;top:542.5px;width:980px;height:17px;background:linear-gradient(#fbfbfb,#ececec);border-bottom:1px solid #c8c8c8"></div>
<div class="r" style="left:52.5px;top:543px;width:1px;height:16px;background:#d0d0d0"></div>
<div class="r" style="left:97px;top:543px;width:1px;height:16px;background:#d0d0d0"></div>
<div class="t m" style="left:23px;top:545.6px;color:#222;font-family:'Liberation Mono',monospace;font-size:11px;">Type</div>
<div class="t m" style="left:68px;top:545.6px;color:#222;font-family:'Liberation Mono',monospace;font-size:11px;">ID</div>
<div class="t m" style="left:100px;top:545.6px;color:#222;font-family:'Liberation Mono',monospace;font-size:11px;">Message</div>
<div class="r" style="left:18px;top:559.5px;width:980px;height:253.5px;overflow:hidden">
<div class="t m" style="left:36.0px;top:1.8000000000000007px;color:#2a9a2a;font-family:'Liberation Mono',monospace">332104</div>
<div class="t m" style="left:80px;top:1.8000000000000007px;color:#2a9a2a;font-family:'Liberation Mono',monospace">Reading SDC File: 'pio/synthesis/submodules/altera_avalon_st_jtag_interface.sdc'</div>
<div class="r" style="left:0;top:15.3px;width:980px;height:15.3px;background:#308cc6"></div>
<div class="t m" style="left:36.0px;top:17.1px;color:#fff;font-family:'Liberation Mono',monospace">332104</div>
<div class="t m" style="left:80px;top:17.1px;color:#fff;font-family:'Liberation Mono',monospace">Reading SDC File: 'pio/synthesis/submodules/hps_sdram_p0.sdc'</div>
<div class="t m" style="left:36.0px;top:32.400000000000006px;color:#2a9a2a;font-family:'Liberation Mono',monospace">332151</div>
<div class="t m" style="left:80px;top:32.400000000000006px;color:#2a9a2a;font-family:'Liberation Mono',monospace">Clock uncertainty is not calculated until you update the timing netlist.</div>
<div class="t m" style="left:80px;top:47.7px;color:#e8141e;font-family:'Liberation Mono',monospace">The auto-constraining script was not able to detect any instance for core &lt; hps_sdram_p0 &gt;</div>
<div class="t m" style="left:80px;top:63.0px;color:#e8141e;font-family:'Liberation Mono',monospace">Verify the following:</div>
<div class="t m" style="left:80px;top:78.3px;color:#e8141e;font-family:'Liberation Mono',monospace"> The core &lt; hps_sdram_p0 &gt; is instantiated within another component (wrapper)</div>
<div class="t m" style="left:80px;top:93.60000000000001px;color:#e8141e;font-family:'Liberation Mono',monospace"> The core is not the top-level of the project</div>
<div class="t m" style="left:80px;top:108.9px;color:#e8141e;font-family:'Liberation Mono',monospace"> The memory interface pins are exported to the top-level of the project</div>
<div class="t m" style="left:80px;top:124.20000000000002px;color:#e8141e;font-family:'Liberation Mono',monospace">Alternatively, if you are no longer instantiating core &lt; hps_sdram_p0 &gt;,</div>
<div class="t m" style="left:80px;top:139.50000000000003px;color:#e8141e;font-family:'Liberation Mono',monospace"> clean up any stale SDC_FILE references from the QSF/QIP files.</div>
<div class="t m" style="left:36.0px;top:154.8px;color:#2a2af2;font-family:'Liberation Mono',monospace">332008</div>
<div class="t m" style="left:80px;top:154.8px;color:#2a2af2;font-family:'Liberation Mono',monospace">Read_sdc failed due to errors in the SDC file</div>
<div class="t m" style="left:36.0px;top:170.10000000000002px;color:#2a2af2;font-family:'Liberation Mono',monospace">332060</div>
<div class="t m" style="left:80px;top:170.10000000000002px;color:#2a2af2;font-family:'Liberation Mono',monospace">Node: FPGA_CLK1_50 was determined to be a clock but was found without an associated clock assignment.</div>
<div class="t m" style="left:36.0px;top:185.40000000000003px;color:#2a9a2a;font-family:'Liberation Mono',monospace">332123</div>
<div class="t m" style="left:80px;top:185.40000000000003px;color:#2a9a2a;font-family:'Liberation Mono',monospace">Deriving Clock Uncertainty. Please refer to report_sdc in the Timing Analyzer to see clock uncertainties.</div>
<div class="t m" style="left:36.0px;top:200.70000000000002px;color:#2a9a2a;font-family:'Liberation Mono',monospace">176235</div>
<div class="t m" style="left:80px;top:200.70000000000002px;color:#2a9a2a;font-family:'Liberation Mono',monospace">Finished register packing</div>
<div class="t m" style="left:42.599999999999994px;top:216.00000000000003px;color:#2a9a2a;font-family:'Liberation Mono',monospace">11798</div>
<div class="t m" style="left:80px;top:216.00000000000003px;color:#2a9a2a;font-family:'Liberation Mono',monospace">Fitter preparation operations ending: elapsed time is 00:00:17</div>
<div class="t m" style="left:36.0px;top:231.3px;color:#2a2af2;font-family:'Liberation Mono',monospace">171167</div>
<div class="t m" style="left:80px;top:231.3px;color:#2a2af2;font-family:'Liberation Mono',monospace">Found invalid Fitter assignments. See the Ignored Assignments panel in the Fitter Compilation Report for more information.</div>
<div class="t m" style="left:36.0px;top:246.60000000000002px;color:#2a2af2;font-family:'Liberation Mono',monospace">169064</div>
<div class="t m" style="left:80px;top:246.60000000000002px;color:#2a2af2;font-family:'Liberation Mono',monospace">Following 95 pins have no output enable or a GND or VCC output enable - later changes to this connectivity may change fitting results</div>
</div>
<svg class="r" style="left:60px;top:515.8px;" width="12" height="12" viewBox="0 0 12 12"><circle cx="6" cy="6" r="6" fill="#e8141e"/><path d="M3.4 3.4L8.6 8.6M8.6 3.4L3.4 8.6" stroke="#fff" stroke-width="2"/></svg>
<svg class="r" style="left:84.8px;top:515.6px;" width="14" height="12" viewBox="0 0 14 12"><path d="M7 0L14 12H0z" fill="#9b45c0"/><path d="M4.5 6.5L9.5 11M9.5 6.5L4.5 11" stroke="#fff" stroke-width="1.8"/></svg>
<svg class="r" style="left:110px;top:515.6px;" width="14" height="12" viewBox="0 0 14 12"><path d="M7 0L14 12H0z" fill="#f7a81b"/><rect x="6.2" y="4" width="1.7" height="4.5" fill="#1b4f9a"/><rect x="6.2" y="9.2" width="1.7" height="1.6" fill="#1b4f9a"/></svg>
<div class="r" style="left:67.2px;top:504.6px;width:13.7px;height:8.5px;border-radius:4.5px;background:#d8141e;color:#fff;font:8.5px/9px 'Liberation Sans',sans-serif;text-align:center">10</div>
<div class="r" style="left:97.3px;top:504.6px;width:8.7px;height:8.5px;border-radius:4.5px;background:#1a6fe0;color:#fff;font:8.5px/9px 'Liberation Sans',sans-serif;text-align:center">1</div>
<div class="r" style="left:118.1px;top:504.6px;width:13.3px;height:8.5px;border-radius:4.5px;background:#1a6fe0;color:#fff;font:8.5px/9px 'Liberation Sans',sans-serif;text-align:center">63</div>
<svg class="r" style="left:144px;top:516px;" width="13" height="11" viewBox="0 0 13 11"><path d="M0.5 10.5L5 0.5" stroke="#4a3a3a" stroke-width="1.1"/><path d="M4.6 1.2Q7 -0.5 12.5 5Q10.5 7 9.5 11Q6.5 8.5 2.8 7z" fill="#12a0f0"/></svg>
<svg class="r" style="left:173px;top:515.5px;" width="14" height="11" viewBox="0 0 14 11"><path d="M0 1.5Q7 -1 14 1.5L9 6V10.5H5V6z" fill="#ff9500"/><ellipse cx="7" cy="1.6" rx="4.5" ry="0.8" fill="#fff"/></svg>
<svg class="r" style="left:440px;top:514.8px;" width="14" height="13" viewBox="0 0 14 13"><path d="M1 4L3 0.5h3V5h2V0.5h3l2 3.5v7H8V8H6v3H1z" fill="#1b5aa0"/><circle cx="3.7" cy="9" r="3.5" fill="#1b5aa0"/><circle cx="10.3" cy="9" r="3.5" fill="#1b5aa0"/><circle cx="3.7" cy="9.2" r="1.6" fill="#bfe4ff"/><circle cx="10.3" cy="9.2" r="1.6" fill="#bfe4ff"/></svg>
<svg class="r" style="left:506px;top:514.8px;" width="14" height="13" viewBox="0 0 14 13"><path d="M1 4L3 0.5h3V5h2V0.5h3l2 3.5v7H8V8H6v3H1z" fill="#1b5aa0"/><circle cx="3.7" cy="9" r="3.5" fill="#1b5aa0"/><circle cx="10.3" cy="9" r="3.5" fill="#1b5aa0"/><circle cx="3.7" cy="9.2" r="1.6" fill="#bfe4ff"/><circle cx="10.3" cy="9.2" r="1.6" fill="#bfe4ff"/></svg>
<svg class="r" style="left:515px;top:511.5px;" width="6" height="5" viewBox="0 0 6 5"><path d="M0 3.5L4 0.5M4 0.5l-2 0M4 0.5v2" stroke="#f0a020" stroke-width="1.2" fill="none"/></svg>
<div class="r" style="left:455.6px;top:526.5px;width:6px;height:1px;background:#222"></div>
<div class="r" style="left:555.5px;top:526.5px;width:6px;height:1px;background:#222"></div>
<svg class="r" style="left:1px;top:506px;" width="10" height="10" viewBox="0 0 10 10"><rect x="0.5" y="0.5" width="9" height="9" rx="1.5" fill="none" stroke="#777"/><path d="M2.5 2.5l5 5M7.5 2.5l-5 5" stroke="#333" stroke-width="1.4"/></svg>
<svg class="r" style="left:1px;top:521.5px;" width="10" height="10" viewBox="0 0 10 10"><rect x="0.5" y="0.5" width="9" height="9" rx="1.5" fill="none" stroke="#777" stroke-width="1"/><rect x="4" y="2.5" width="3.5" height="3.5" fill="none" stroke="#777" stroke-width=".9"/><rect x="2.5" y="4.5" width="3" height="3" fill="#fff" stroke="#777" stroke-width=".9"/></svg>
<div class="r" style="left:0px;top:534px;width:12px;height:13px;background:#dadada;border:1px solid #c2c2c2;border-left:none;border-radius:0 2px 2px 0"></div>
<svg class="r" style="left:2.5px;top:535.5px;" width="7" height="10" viewBox="0 0 7 10"><rect x="1.5" y="0.5" width="4" height="5" fill="none" stroke="#222" stroke-width="1"/><path d="M0 6h7M3.5 6v4" stroke="#222" stroke-width="1.2"/></svg>
<svg class="r" style="left:1px;top:552px;" width="9" height="8" viewBox="0 0 9 8"><path d="M0 1h9M0 4h9M0 7h9" stroke="#666" stroke-width="1.2"/></svg>
<svg class="r" style="left:38.699999999999996px;top:561.55px;" width="11.2" height="11.2" viewBox="0 0 11.2 11.2"><circle cx="5.6" cy="5.6" r="5.6" fill="#12a0f0"/><rect x="4.8" y="4.1" width="1.6" height="5" fill="#fff"/><rect x="4.8" y="1.5999999999999996" width="1.6" height="1.6" fill="#fff"/></svg>
<svg class="r" style="left:38.699999999999996px;top:576.8499999999999px;" width="11.2" height="11.2" viewBox="0 0 11.2 11.2"><circle cx="5.6" cy="5.6" r="5.6" fill="#3aa7f0"/><rect x="4.8" y="4.1" width="1.6" height="5" fill="#fff"/><rect x="4.8" y="1.5999999999999996" width="1.6" height="1.6" fill="#fff"/></svg>
<svg class="r" style="left:38.699999999999996px;top:592.15px;" width="11.2" height="11.2" viewBox="0 0 11.2 11.2"><circle cx="5.6" cy="5.6" r="5.6" fill="#12a0f0"/><rect x="4.8" y="4.1" width="1.6" height="5" fill="#fff"/><rect x="4.8" y="1.5999999999999996" width="1.6" height="1.6" fill="#fff"/></svg>
<svg class="r" style="left:38.05px;top:607.05px;" width="12" height="12" viewBox="0 0 12 12"><circle cx="6" cy="6" r="6" fill="#e8141e"/><path d="M3.4 3.4L8.6 8.6M8.6 3.4L3.4 8.6" stroke="#fff" stroke-width="2"/></svg>
<svg class="r" style="left:38.05px;top:622.35px;" width="12" height="12" viewBox="0 0 12 12"><circle cx="6" cy="6" r="6" fill="#e8141e"/><path d="M3.4 3.4L8.6 8.6M8.6 3.4L3.4 8.6" stroke="#fff" stroke-width="2"/></svg>
<svg class="r" style="left:38.05px;top:637.65px;" width="12" height="12" viewBox="0 0 12 12"><circle cx="6" cy="6" r="6" fill="#e8141e"/><path d="M3.4 3.4L8.6 8.6M8.6 3.4L3.4 8.6" stroke="#fff" stroke-width="2"/></svg>
<svg class="r" style="left:38.05px;top:652.9499999999999px;" width="12" height="12" viewBox="0 0 12 12"><circle cx="6" cy="6" r="6" fill="#e8141e"/><path d="M3.4 3.4L8.6 8.6M8.6 3.4L3.4 8.6" stroke="#fff" stroke-width="2"/></svg>
<svg class="r" style="left:38.05px;top:668.25px;" width="12" height="12" viewBox="0 0 12 12"><circle cx="6" cy="6" r="6" fill="#e8141e"/><path d="M3.4 3.4L8.6 8.6M8.6 3.4L3.4 8.6" stroke="#fff" stroke-width="2"/></svg>
<svg class="r" style="left:38.05px;top:683.55px;" width="12" height="12" viewBox="0 0 12 12"><circle cx="6" cy="6" r="6" fill="#e8141e"/><path d="M3.4 3.4L8.6 8.6M8.6 3.4L3.4 8.6" stroke="#fff" stroke-width="2"/></svg>
<svg class="r" style="left:38.05px;top:698.85px;" width="12" height="12" viewBox="0 0 12 12"><circle cx="6" cy="6" r="6" fill="#e8141e"/><path d="M3.4 3.4L8.6 8.6M8.6 3.4L3.4 8.6" stroke="#fff" stroke-width="2"/></svg>
<svg class="r" style="left:37px;top:714.15px;" width="14" height="12" viewBox="0 0 14 12"><path d="M7 0L14 12H0z" fill="#9b45c0"/><path d="M4.5 6.5L9.5 11M9.5 6.5L4.5 11" stroke="#fff" stroke-width="1.8"/></svg>
<svg class="r" style="left:37px;top:729.4499999999999px;" width="14" height="12" viewBox="0 0 14 12"><path d="M7 0L14 12H0z" fill="#f7a81b"/><rect x="6.2" y="4" width="1.7" height="4.5" fill="#1b4f9a"/><rect x="6.2" y="9.2" width="1.7" height="1.6" fill="#1b4f9a"/></svg>
<svg class="r" style="left:24.5px;top:732.4499999999999px;" width="4" height="7" viewBox="0 0 4 7"><path d="M0 0v7l4-3.5z" fill="#444"/></svg>
<svg class="r" style="left:38.699999999999996px;top:745.15px;" width="11.2" height="11.2" viewBox="0 0 11.2 11.2"><circle cx="5.6" cy="5.6" r="5.6" fill="#12a0f0"/><rect x="4.8" y="4.1" width="1.6" height="5" fill="#fff"/><rect x="4.8" y="1.5999999999999996" width="1.6" height="1.6" fill="#fff"/></svg>
<svg class="r" style="left:38.699999999999996px;top:760.4499999999999px;" width="11.2" height="11.2" viewBox="0 0 11.2 11.2"><circle cx="5.6" cy="5.6" r="5.6" fill="#12a0f0"/><rect x="4.8" y="4.1" width="1.6" height="5" fill="#fff"/><rect x="4.8" y="1.5999999999999996" width="1.6" height="1.6" fill="#fff"/></svg>
<svg class="r" style="left:24.5px;top:763.05px;" width="4" height="7" viewBox="0 0 4 7"><path d="M0 0v7l4-3.5z" fill="#444"/></svg>
<svg class="r" style="left:38.699999999999996px;top:775.75px;" width="11.2" height="11.2" viewBox="0 0 11.2 11.2"><circle cx="5.6" cy="5.6" r="5.6" fill="#12a0f0"/><rect x="4.8" y="4.1" width="1.6" height="5" fill="#fff"/><rect x="4.8" y="1.5999999999999996" width="1.6" height="1.6" fill="#fff"/></svg>
<svg class="r" style="left:37px;top:790.65px;" width="14" height="12" viewBox="0 0 14 12"><path d="M7 0L14 12H0z" fill="#f7a81b"/><rect x="6.2" y="4" width="1.7" height="4.5" fill="#1b4f9a"/><rect x="6.2" y="9.2" width="1.7" height="1.6" fill="#1b4f9a"/></svg>
<svg class="r" style="left:37px;top:805.9499999999999px;" width="14" height="12" viewBox="0 0 14 12"><path d="M7 0L14 12H0z" fill="#f7a81b"/><rect x="6.2" y="4" width="1.7" height="4.5" fill="#1b4f9a"/><rect x="6.2" y="9.2" width="1.7" height="1.6" fill="#1b4f9a"/></svg>
<svg class="r" style="left:24.5px;top:808.9499999999999px;" width="4" height="7" viewBox="0 0 4 7"><path d="M0 0v7l4-3.5z" fill="#444"/></svg>
<div class="r" style="left:17px;top:813px;width:981px;height:13px;background:#e3e3e3;border-top:1px solid #cdcdcd;border-bottom:1px solid #bdbdbd"></div>
<div class="r" style="left:30px;top:814px;width:770px;height:11px;background:linear-gradient(#fdfdfd,#f3f3f3);border-right:1px solid #d0d0d0;border-left:1px solid #d8d8d8"></div>
<div class="r" style="left:16px;top:828px;width:58px;height:11px;background:#e3e3e3;border:1px solid #c4c4c4;border-bottom:none"></div>
<div class="r" style="left:73px;top:826.5px;width:103px;height:13px;background:#f7f7f7;border:1px solid #c4c4c4;border-bottom:none"></div>
<div class="t s" style="left:25px;top:833px;color:#222;font-family:'Liberation Sans',sans-serif;font-size:11px;">System</div>
<div class="t s" style="left:82.5px;top:833px;color:#222;font-family:'Liberation Sans',sans-serif;font-size:11px;">Processing (344)</div>
<div class="t" style="left:-24.2px;top:814.4599999999999px;width:60px;height:13px;transform:rotate(-90deg);color:#222">Messages</div>
<svg class="r" style="left:22px;top:817px;" width="4" height="7" viewBox="0 0 4 7"><path d="M4 0v7L0 3.5z" fill="#444"/></svg>
<svg class="r" style="left:481px;top:486.5px;" width="4" height="7" viewBox="0 0 4 7"><path d="M4 0v7L0 3.5z" fill="#444"/></svg>
<svg class="r" style="left:639px;top:486.5px;" width="4" height="7" viewBox="0 0 4 7"><path d="M0 0v7l4-3.5z" fill="#444"/></svg>
<svg class="r" style="left:656px;top:105px;" width="12" height="12" viewBox="0 0 12 12"><circle cx="4.8" cy="4.8" r="4.2" fill="#12a0f0"/><path d="M7.5 7.5L11 11" stroke="#c0202a" stroke-width="1.8"/></svg>
<svg class="r" style="left:227px;top:309px;" width="16" height="2" viewBox="0 0 16 2"><rect x="0" y="0" width="1" height="1" fill="#b0b0b0"/><rect x="3" y="0" width="1" height="1" fill="#b0b0b0"/><rect x="6" y="0" width="1" height="1" fill="#b0b0b0"/><rect x="9" y="0" width="1" height="1" fill="#b0b0b0"/><rect x="12" y="0" width="1" height="1" fill="#b0b0b0"/><rect x="15" y="0" width="1" height="1" fill="#b0b0b0"/></svg>
<svg class="r" style="left:474.5px;top:269px;" width="2" height="16" viewBox="0 0 2 16"><rect x="0" y="0" width="1" height="1" fill="#b0b0b0"/><rect x="0" y="3" width="1" height="1" fill="#b0b0b0"/><rect x="0" y="6" width="1" height="1" fill="#b0b0b0"/><rect x="0" y="9" width="1" height="1" fill="#b0b0b0"/><rect x="0" y="12" width="1" height="1" fill="#b0b0b0"/><rect x="0" y="15" width="1" height="1" fill="#b0b0b0"/></svg>
<svg class="r" style="left:649px;top:287px;" width="2" height="16" viewBox="0 0 2 16"><rect x="0" y="0" width="1" height="1" fill="#b0b0b0"/><rect x="0" y="3" width="1" height="1" fill="#b0b0b0"/><rect x="0" y="6" width="1" height="1" fill="#b0b0b0"/><rect x="0" y="9" width="1" height="1" fill="#b0b0b0"/><rect x="0" y="12" width="1" height="1" fill="#b0b0b0"/><rect x="0" y="15" width="1" height="1" fill="#b0b0b0"/></svg>
<svg class="r" style="left:802.6px;top:498px;" width="16" height="2" viewBox="0 0 16 2"><rect x="0" y="0" width="1" height="1" fill="#b0b0b0"/><rect x="3" y="0" width="1" height="1" fill="#b0b0b0"/><rect x="6" y="0" width="1" height="1" fill="#b0b0b0"/><rect x="9" y="0" width="1" height="1" fill="#b0b0b0"/><rect x="12" y="0" width="1" height="1" fill="#b0b0b0"/><rect x="15" y="0" width="1" height="1" fill="#b0b0b0"/></svg>
</body></html>
